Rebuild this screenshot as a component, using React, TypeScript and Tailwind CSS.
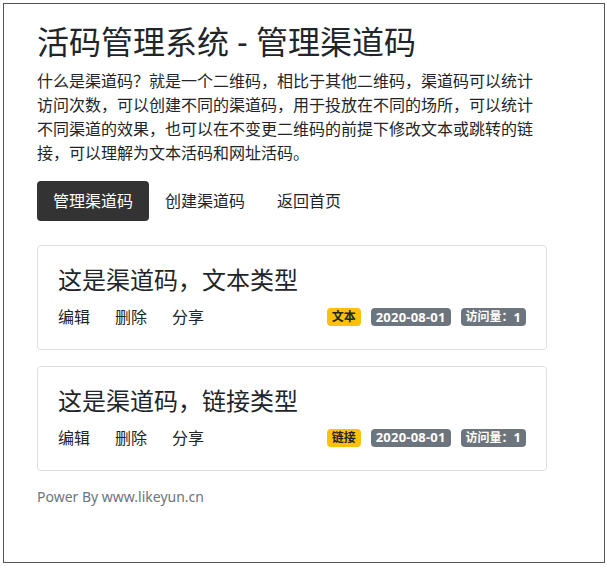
import React from "react";

const font = { fontFamily: '"Noto Sans", "Noto Sans CJK SC", sans-serif' };

function Card({ title, type }: { title: string; type: string }) {
  return (
    <div className="border border-[#dfdfdf] rounded-[4px] px-5 py-5">
      <h3 className="text-[24px] leading-[1.2] font-normal text-[#212529] mb-[10px]">{title}</h3>
      <div className="flex items-center justify-between">
        <div className="flex gap-[25px] text-[16px] leading-6 text-[#212529]">
          <a>编辑</a>
          <a>删除</a>
          <a>分享</a>
        </div>
        <div className="flex items-center gap-[10px] text-[12px] font-bold leading-none">
          <span className="bg-[#ffc107] text-[#212529] rounded-[4px] px-[5px] h-[18px] flex items-center">{type}</span>
          <span className="bg-[#6c757d] text-white rounded-[4px] px-[5px] h-[18px] flex items-center text-[13px] tracking-[0.2px]">2020-08-01</span>
          <span className="bg-[#6c757d] text-white rounded-[4px] px-[5px] h-[18px] flex items-center">访问量：<span className="text-[13px]">1</span></span>
        </div>
      </div>
    </div>
  );
}

export default function App() {
  return (
    <div style={font} className="bg-white w-[607px] h-[566px] pt-[3px] px-[3px]">
      <div className="border border-[#555] w-[602px] h-[560px] pl-[33px] pt-[19px]">
        <div className="w-[510px]">
          <h2 className="text-[32px] leading-[1.2] font-normal text-[#212529] mb-2">活码管理系统 - 管理渠道码</h2>
          <p className="text-[16px] leading-6 text-[#212529]">
            什么是渠道码？就是一个二维码，相比于其他二维码，渠道码可以统计访问次数，可以创建不同的渠道码，用于投放在不同的场所，可以统计不同渠道的效果，也可以在不变更二维码的前提下修改文本或跳转的链接，可以理解为文本活码和网址活码。
          </p>
          <nav className="flex mt-4 text-[16px] leading-6">
            <a className="bg-[#333] text-white rounded-[4px] px-4 py-2">管理渠道码</a>
            <a className="text-[#212529] px-4 py-2">创建渠道码</a>
            <a className="text-[#212529] px-4 py-2">返回首页</a>
          </nav>
          <div className="mt-6 flex flex-col gap-4">
            <Card title="这是渠道码，文本类型" type="文本" />
            <Card title="这是渠道码，链接类型" type="链接" />
          </div>
          <div className="mt-[14px] text-[14px] leading-6 text-[#6c757d]">Power By www.likeyun.cn</div>
        </div>
      </div>
    </div>
  );
}
